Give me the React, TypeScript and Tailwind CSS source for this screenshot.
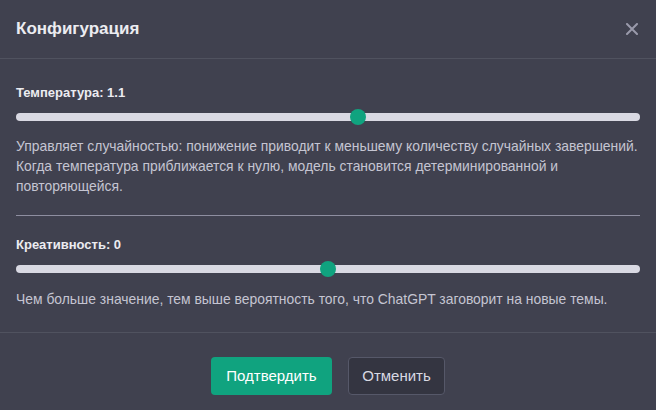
import React, { useState } from 'react';

interface SliderProps {
  label: string;
  value: number;
  min: number;
  max: number;
}

const Slider: React.FC<SliderProps> = ({ label, value, min, max }) => {
  const pct = (value - min) / (max - min);

  return (
    <div>
      <div className="text-[13px] leading-5 font-bold text-[#ececf1]">
        {label}: {value}
      </div>
      <div className="relative mt-[10px] h-2 rounded-full bg-[#d9d9e3]">
        <div
          className="absolute top-1/2 h-4 w-4 -translate-y-1/2 rounded-full bg-[#10a37f]"
          style={{ left: `calc(${pct} * (100% - 16px))` }}
        />
      </div>
    </div>
  );
};

export default function App() {
  const [temperature] = useState(1.1);
  const [creativity] = useState(0);

  return (
    <div
      className="w-[656px] h-[410px] bg-[#40414f] text-[#c5c5d2] overflow-hidden"
      style={{ fontFamily: '"Liberation Sans", Arial, sans-serif' }}
    >
      <div className="flex h-[59px] items-center justify-between border-b border-[#50525f] pl-4 pr-[18px] pb-[1px]">
        <h2 className="text-[17px] font-bold text-[#ececf1]">Конфигурация</h2>
        <button className="text-[#9a9aab]">
          <svg width="12" height="12" viewBox="0 0 12 12" fill="none">
            <path d="M1 1L11 11M11 1L1 11" stroke="currentColor" strokeWidth="2" strokeLinecap="round" />
          </svg>
        </button>
      </div>

      <div className="border-b border-[#50525f] px-4 pt-6 pb-[23px]">
        <Slider label="Температура" value={temperature} min={0} max={2} />
        <p className="mt-[15px] text-[13.9px] leading-5">
          Управляет случайностью: понижение приводит к меньшему количеству случайных завершений.
          Когда температура приближается к нулю, модель становится детерминированной и
          повторяющейся.
        </p>
        <div className="mt-[19px] h-px bg-[#8e8ea0]" />
        <div className="mt-[19px]">
          <Slider label="Креативность" value={creativity} min={-2} max={2} />
        </div>
        <p className="mt-[16px] text-[13.9px] leading-5">
          Чем больше значение, тем выше вероятность того, что ChatGPT заговорит на новые темы.
        </p>
      </div>

      <div className="flex justify-center gap-4 pt-6">
        <button className="h-[38px] w-[121px] rounded-[4px] bg-[#10a37f] text-[15px] text-white">
          Подтвердить
        </button>
        <button className="h-[38px] w-[97px] rounded-[4px] border border-[#565869] bg-[#343541] text-[15px] text-[#d9d9e3]">
          Отменить
        </button>
      </div>
    </div>
  );
}
